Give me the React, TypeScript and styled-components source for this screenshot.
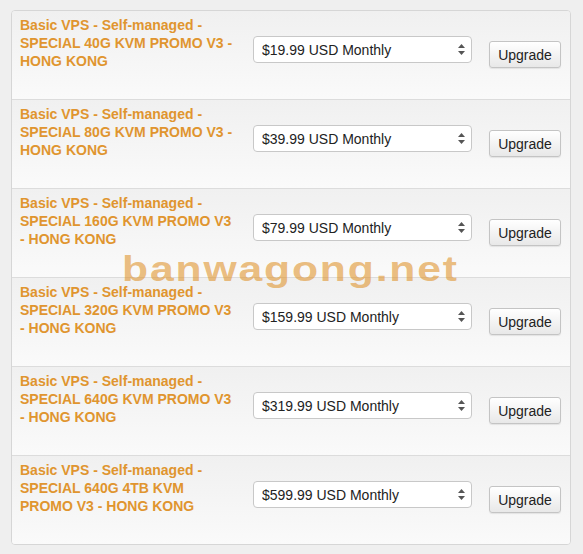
import React from "react";
import styled, { createGlobalStyle } from "styled-components";

const Global = createGlobalStyle`
  html, body { margin: 0; padding: 0; background: #efefef; }
  body { font-family: "Liberation Sans", Arial, Helvetica, sans-serif; }
`;

const Page = styled.div`
  position: relative;
  padding: 10px 12px 9px 11px;
  width: 583px;
  box-sizing: border-box;
`;

const Panel = styled.div`
  border: 1px solid #d6d6d6;
  border-radius: 4px;
  overflow: hidden;
  background: #f7f7f7;
`;

const Row = styled.div<{ $last?: boolean }>`
  display: flex;
  align-items: flex-start;
  height: ${(p) => (p.$last ? "88px" : "89px")};
  box-sizing: border-box;
  padding: 0 0 0 8px;
  border-bottom: ${(p) => (p.$last ? "none" : "1px solid #dcdcdc")};
  background: linear-gradient(to bottom, #f0f0f0 0%, #fafafa 100%);
`;

const Title = styled.div`
  flex: 0 0 222px;
  margin-top: 5px;
  font-weight: bold;
  font-size: 14px;
  line-height: 18px;
  color: #e0952f;
`;

const SelectWrap = styled.div`
  position: relative;
  flex: 0 0 219px;
  margin-top: 25px;
  margin-left: 11px;
  height: 27px;
`;

const Select = styled.select`
  appearance: none;
  -webkit-appearance: none;
  width: 100%;
  height: 27px;
  box-sizing: border-box;
  border: 1px solid #c8c8c8;
  border-radius: 4px;
  background: #fff;
  padding: 0 0 0 8px;
  font-family: "Liberation Sans", Arial, sans-serif;
  font-size: 14px;
  color: #222;
  outline: none;
`;

const Arrows = styled.svg`
  position: absolute;
  right: 7px;
  top: 8px;
  pointer-events: none;
`;

const Button = styled.button`
  flex: 0 0 72px;
  margin-top: 30px;
  margin-left: 17px;
  height: 27px;
  box-sizing: border-box;
  border: 1px solid #c4c4c4;
  border-radius: 3px;
  background: linear-gradient(to bottom, #ffffff 0%, #e8e8e8 100%);
  box-shadow: 0 1px 1px rgba(0, 0, 0, 0.08);
  font-family: "Liberation Sans", Arial, sans-serif;
  font-size: 14px;
  color: #222;
  padding: 0;
`;

const Watermark = styled.div`
  position: absolute;
  left: 122px;
  top: 249px;
  font-family: "Liberation Sans", Arial, sans-serif;
  font-weight: bold;
  font-size: 35px;
  letter-spacing: 1.5px;
  line-height: 40px;
  color: rgba(224, 149, 47, 0.62);
  pointer-events: none;
  white-space: nowrap;
  transform: scaleX(1.22);
  transform-origin: left center;
`;

const plans = [
  { title: ["Basic VPS - Self-managed -", "SPECIAL 40G KVM PROMO V3 -", "HONG KONG"], price: "$19.99 USD Monthly" },
  { title: ["Basic VPS - Self-managed -", "SPECIAL 80G KVM PROMO V3 -", "HONG KONG"], price: "$39.99 USD Monthly" },
  { title: ["Basic VPS - Self-managed -", "SPECIAL 160G KVM PROMO V3", "- HONG KONG"], price: "$79.99 USD Monthly" },
  { title: ["Basic VPS - Self-managed -", "SPECIAL 320G KVM PROMO V3", "- HONG KONG"], price: "$159.99 USD Monthly" },
  { title: ["Basic VPS - Self-managed -", "SPECIAL 640G KVM PROMO V3", "- HONG KONG"], price: "$319.99 USD Monthly" },
  { title: ["Basic VPS - Self-managed -", "SPECIAL 640G 4TB KVM", "PROMO V3 - HONG KONG"], price: "$599.99 USD Monthly" },
];

export default function App() {
  return (
    <>
      <Global />
      <Page>
        <Panel>
          {plans.map((p, i) => (
            <Row key={i} $last={i === plans.length - 1}>
              <Title>
                {p.title.map((l, j) => (
                  <React.Fragment key={j}>
                    {l}
                    {j < p.title.length - 1 && <br />}
                  </React.Fragment>
                ))}
              </Title>
              <SelectWrap>
                <Select defaultValue={p.price}>
                  <option>{p.price}</option>
                </Select>
                <Arrows width="7" height="11" viewBox="0 0 7 11">
                  <path d="M3.5 0 L7 4 L0 4 Z" fill="#555" />
                  <path d="M3.5 11 L7 7 L0 7 Z" fill="#555" />
                </Arrows>
              </SelectWrap>
              <Button>Upgrade</Button>
            </Row>
          ))}
        </Panel>
        <Watermark>banwagong.net</Watermark>
      </Page>
    </>
  );
}
